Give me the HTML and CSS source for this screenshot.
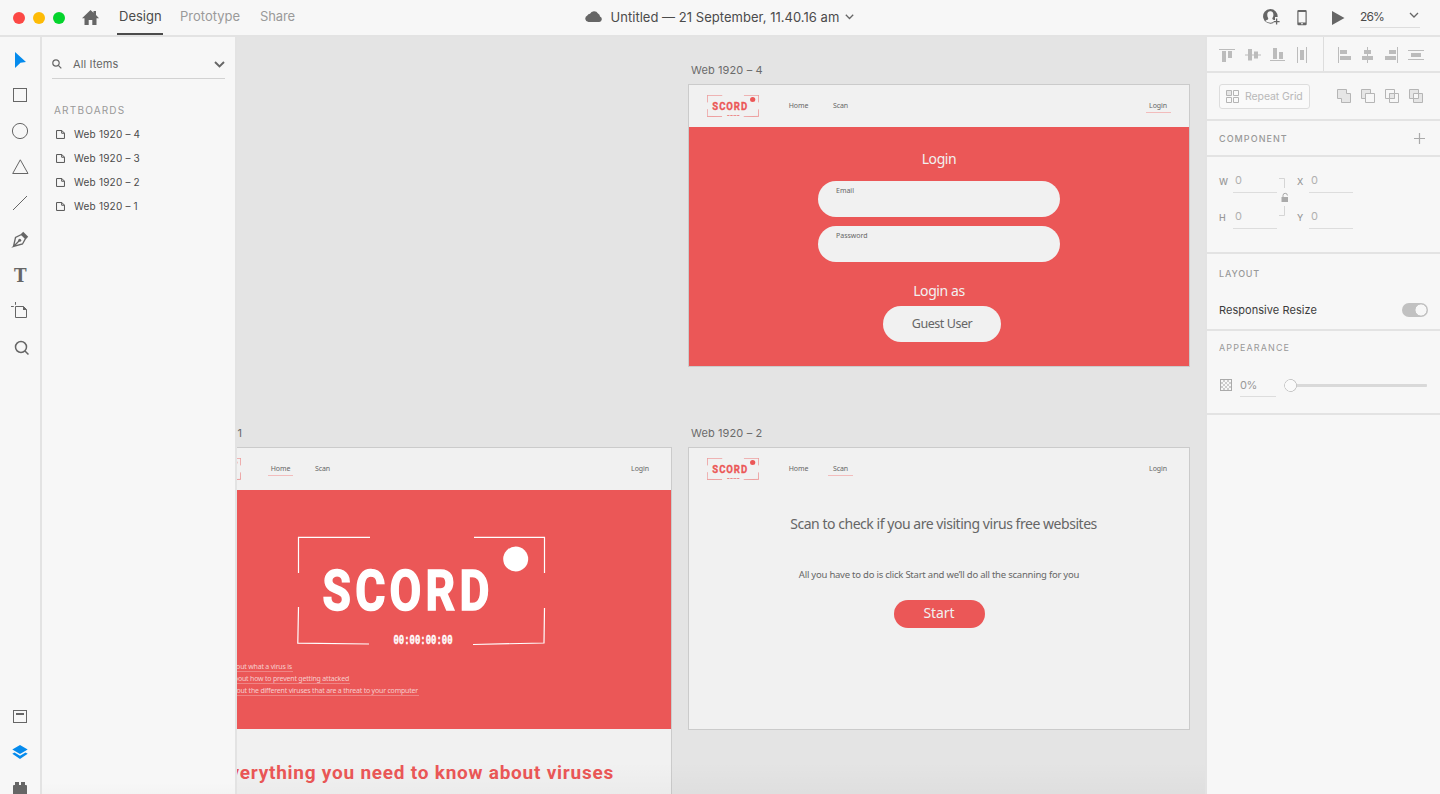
FILE: index.html
```html
<!DOCTYPE html>
<html lang="en">
<head>
<meta charset="utf-8">
<title>Untitled — 21 September, 11.40.16 am</title>
<link rel="stylesheet" href="styles.css">
</head>
<body>
<svg class="defs" aria-hidden="true">
  <symbol id="logo" viewBox="0 0 249 110" preserveAspectRatio="none">
    <g fill="none" stroke="currentColor">
      <path d="M73 1.3H1.5V37M1.5 71L.8 107.200L72 108"/>
      <path d="M177 1.3H247.500V37M247.500 72L247 107L176 108.500"/>
    </g>
    <circle cx="218.700" cy="23" r="12.500" fill="currentColor"/>
    <g fill="currentColor" stroke="currentColor" font-weight="700">
      <text transform="translate(25.500 74.300) scale(.83 1)" font-family="Roboto, sans-serif" stroke-width="1.600" font-size="55.500" textLength="201" lengthAdjust="spacing">SCORD</text>
      <text x="96.500" y="107.500" font-family="Liberation Mono, monospace" stroke-width=".4" font-size="12" textLength="59" lengthAdjust="spacingAndGlyphs">00:00:00:00</text>
    </g>
  </symbol>
  <symbol id="page" viewBox="0 0 10 10"><path d="M.6.6H6.500L9.400 3.500V9.400H.6ZM6.300.6V3.600H9.400" fill="none" stroke="currentColor" stroke-width="1.100"/></symbol>
</svg>

<div class="app">
  <header class="titlebar">
    <div class="title-left">
      <div class="lights"><i class="red"></i><i class="yellow"></i><i class="green"></i></div>
      <svg class="home" width="17" height="15" viewBox="0 0 17 15"><path d="M8.500 0L11.500 2.700V1H14V5L17 8.200H14.500V15H10.300V10H6.700V15H2.500V8.200H0Z"/></svg>
      <nav class="modes"><a class="mode active">Design</a><a class="mode proto">Prototype</a><a class="mode share">Share</a></nav>
    </div>
    <div class="doc">
      <svg width="17" height="11" viewBox="0 0 17 11"><path d="M3.500 11A3.400 3.400 0 0 1 2.300 4.500A3 3 0 0 1 5 2.800A4.500 4.500 0 0 1 13 2.500A3.500 3.500 0 0 1 15 5.600A2.800 2.800 0 0 1 14.300 11Z"/></svg>
      <span class="doc-name">Untitled — 21 September, 11.40.16 am</span>
      <svg width="9" height="6" viewBox="0 0 9 6"><path class="line" d="M.8.8L4.500 4.500L8.200.8"/></svg>
    </div>
    <div class="title-right">
      <svg class="user" width="17" height="17" viewBox="0 0 17 17"><path fill-rule="evenodd" d="M7.300 0A7.300 7.300 0 0 1 14.600 8H12V11H10.500V13.900A7.300 7.300 0 1 1 7.300 0ZM7.300 2.200C5 2.200 4.100 4 4.300 6.200C4.400 8 5.200 8.700 5.300 9.800C5.200 11 3 11 2.500 12C5 14 8.500 14.200 10.500 12.800V10.700C9.800 10.500 9.300 10.300 9.300 9.800C9.400 8.700 10.200 8 10.400 6.200C10.500 4 9.700 2.200 7.300 2.200Z"/><path class="line" d="M13.600 9.600V15.600M10.600 12.600H16.600"/></svg>
      <svg class="phone" width="10" height="16" viewBox="0 0 10 16"><path fill-rule="evenodd" d="M1.500 0H8.500Q9.700 0 9.700 1.300V14Q9.700 15.300 8.500 15.300H1.500Q.3 15.300 .3 14V1.300Q.3 0 1.500 0ZM1.500 2V12.400H8.500V2ZM4 13.200V14.300H6V13.200Z"/></svg>
      <svg class="play" width="13" height="14" viewBox="0 0 13 14"><path d="M0 0L12.500 7L0 14Z"/></svg>
      <div class="zoom"><span>26%</span><svg width="10" height="7" viewBox="0 0 10 7"><path class="line" d="M1 1L5 5L9 1"/></svg></div>
    </div>
  </header>

  <div class="workspace">
    <aside class="rail">
      <svg class="tool blue" viewBox="0 0 24 24"><path d="M7 4L18 14L12.500 14.800L7 20Z"/></svg>
      <svg class="tool" viewBox="0 0 24 24"><rect class="ol" x="5.500" y="4.500" width="13" height="13"/></svg>
      <svg class="tool" viewBox="0 0 24 24"><circle class="ol" cx="12" cy="11" r="7.600"/></svg>
      <svg class="tool" viewBox="0 0 24 24"><path class="ol" d="M12.300 3.800L20 17.500H4.700Z"/></svg>
      <svg class="tool" viewBox="0 0 24 24"><path class="ol" d="M5 18L19 4"/></svg>
      <svg class="tool" viewBox="0 0 24 24"><path class="ol nib" d="M5.500 18.500L7.500 9.500L13.500 6.500L17.500 10.500L14.500 16L5.500 18.500L11 13"/><circle cx="11.700" cy="12.200" r="1.500"/><path d="M15.200 3.800L20.200 8.800L18 11L13 6Z"/></svg>
      <svg class="tool" viewBox="0 0 24 24"><text x="6" y="18" font-family="DejaVu Serif, serif" font-size="19" textLength="12.600" lengthAdjust="spacingAndGlyphs" font-weight="700">T</text></svg>
      <svg class="tool" viewBox="0 0 24 24"><path class="ol" d="M7.500 6.500H15.500L18.500 9.500V17.500H7.500ZM7.500 2V4.800M3 6.500H5.800"/><path d="M15 6V10H19Z"/></svg>
      <svg class="tool" viewBox="0 0 24 24"><circle class="ol thick" cx="13" cy="11" r="5.500"/><path class="ol thick" d="M17 15L20.500 18.500"/></svg>
      <div class="rail-bottom">
        <svg class="tool" viewBox="0 0 24 24"><rect class="ol" x="5.500" y="6.500" width="13" height="12"/><path d="M8 9H16V11H8Z"/></svg>
        <svg class="tool blue" viewBox="0 0 24 24"><path d="M12 5L19.700 9.500L12 14L4.300 9.500ZM4.300 13.800L6.500 12.600L12 15.800L17.500 12.600L19.700 13.800L12 19Z"/></svg>
        <svg class="tool" viewBox="0 0 24 24"><path d="M7 6H11V9H13V6H17V9H18Q19 9 19 10V19H5V10Q5 9 6 9H7Z"/></svg>
      </div>
    </aside>

    <aside class="layers">
      <div class="filter">
        <svg width="10" height="10" viewBox="0 0 10 10"><circle cx="4" cy="4" r="3.200"/><path d="M6.300 6.300L9.300 9.300"/></svg>
        <span>All Items</span>
        <svg class="caret" width="11" height="7" viewBox="0 0 11 7"><path d="M1 1L5.500 5.500L10 1"/></svg>
      </div>
      <h2 class="list-head">ARTBOARDS</h2>
      <ul class="boards">
        <li><svg><use href="#page"/></svg>Web 1920 – 4</li>
        <li><svg><use href="#page"/></svg>Web 1920 – 3</li>
        <li><svg><use href="#page"/></svg>Web 1920 – 2</li>
        <li><svg><use href="#page"/></svg>Web 1920 – 1</li>
      </ul>
    </aside>

    <main class="canvas">
      <div class="artboard-slot at-4">
        <div class="board-label">Web 1920 – 4</div>
        <section class="artboard">
          <div class="site-nav"><svg class="site-logo"><use href="#logo"/></svg><a>Home</a><a>Scan</a><a class="login on">Login</a></div>
          <div class="signin">
            <h3>Login</h3>
            <div class="field">Email</div>
            <div class="field">Password</div>
            <h3 class="as">Login as</h3>
            <div class="guest">Guest User</div>
          </div>
        </section>
      </div>
      <div class="artboard-slot at-2">
        <div class="board-label">Web 1920 – 2</div>
        <section class="artboard">
          <div class="site-nav"><svg class="site-logo"><use href="#logo"/></svg><a>Home</a><a class="on">Scan</a><a class="login">Login</a></div>
          <div class="scan">
            <h3>Scan to check if you are visiting virus free websites</h3>
            <p>All you have to do is click Start and we’ll do all the scanning for you</p>
            <div class="start">Start</div>
          </div>
        </section>
      </div>
      <div class="artboard-slot at-1">
        <div class="board-label">Web 1920 – 1</div>
        <section class="artboard tall">
          <div class="site-nav"><svg class="site-logo"><use href="#logo"/></svg><a class="on">Home</a><a>Scan</a><a class="login">Login</a></div>
          <div class="hero">
            <svg class="hero-logo"><use href="#logo"/></svg>
            <ul class="links">
              <li class="k1"><a>Learn about what a virus is</a></li>
              <li class="k2"><a>Learn about how to prevent getting attacked</a></li>
              <li class="k3"><a>Learn about the different viruses that are a threat to your computer</a></li>
            </ul>
          </div>
          <h1 class="headline">Everything you need to know about viruses</h1>
        </section>
      </div>
    </main>

    <aside class="inspector">
      <div class="row align">
        <div class="align-group vertical">
          <svg viewBox="0 0 16 16"><path d="M0 2H16V3H0ZM3 4H7V15H3ZM9 4H13V11H9Z"/></svg>
          <svg viewBox="0 0 16 16"><path d="M1 7.500H17V8.500H1ZM4 2H8V13.500H4ZM10 4.500H14V11.500H10Z"/></svg>
          <svg viewBox="0 0 16 16"><path d="M1 13H16V14H1ZM4 1H8V12H4ZM10 5H14V12H10Z"/></svg>
          <svg viewBox="0 0 16 16"><path d="M3 0H4V16H3ZM12 0H13V16H12ZM6 3H10V13H6Z"/></svg>
        </div>
        <div class="align-group horizontal">
          <svg viewBox="0 0 16 16"><path d="M2 0H3V16H2ZM4 3H11V7H4ZM4 9H15V13H4Z"/></svg>
          <svg viewBox="0 0 16 16"><path d="M7 0H8V16H7ZM4 3H11V7H4ZM2 9H13V13H2Z"/></svg>
          <svg viewBox="0 0 16 16"><path d="M13 0H14V16H13ZM5 3H12V7H5ZM1 9H12V13H1Z"/></svg>
          <svg viewBox="0 0 16 16"><path d="M0 3H16V4H0ZM0 12H16V13H0ZM3 6H13V10H3Z"/></svg>
        </div>
      </div>
      <div class="row repeat">
        <div class="repeat-btn"><svg width="13" height="13" viewBox="0 0 13 13"><path class="filled" d="M.5.5H5.500V5.500H.5Z"/><path d="M7.500.5H12.500V5.500H7.500ZM.5 7.500H5.500V12.500H.5ZM7.500 7.500H12.500V12.500H7.500Z"/></svg>Repeat Grid</div>
        <div class="bool">
          <svg viewBox="0 0 14 14"><path class="filled" d="M.5.5H9.500V4.500H13.500V13.500H4.500V9.500H.5Z"/></svg>
          <svg viewBox="0 0 14 14"><path class="filled" d="M.5.5H9.500V9.500H.5Z"/><path class="paper" d="M4.500 4.500H13.500V13.500H4.500Z"/></svg>
          <svg viewBox="0 0 14 14"><path d="M.5.5H9.500V9.500H.5Z"/><path d="M4.500 4.500H13.500V13.500H4.500Z"/><path class="filled" d="M4.500 4.500H9.500V9.500H4.500Z"/></svg>
          <svg viewBox="0 0 14 14"><path class="filled" fill-rule="evenodd" d="M.5.5H9.500V9.500H.5ZM4.500 4.500H13.500V13.500H4.500Z"/></svg>
        </div>
      </div>
      <div class="row component"><h2>COMPONENT</h2><svg width="11" height="11" viewBox="0 0 11 11"><path d="M5.500 0V11M0 5.500H11"/></svg></div>
      <div class="row geometry">
        <label>W</label><output>0</output><i></i><label>X</label><output>0</output>
        <label>H</label><output>0</output><i></i><label>Y</label><output>0</output>
        <svg class="lock" width="10" height="38" viewBox="0 0 10 38"><path class="wire" d="M0 .5H5.500V10M5.500 28V37.500H0"/><path class="shackle" d="M4 20V17.500A2.200 2.200 0 0 1 8.400 17.500"/><path class="body" d="M2.500 19H9V24H2.500Z"/></svg>
      </div>
      <div class="row layout"><h2>LAYOUT</h2><div class="resize"><span>Responsive Resize</span><b class="toggle"></b></div></div>
      <div class="row appearance"><h2>APPEARANCE</h2>
        <div class="opacity"><span class="checker"></span><span class="pct">0%</span><span class="slider"></span></div>
      </div>
    </aside>
  </div>
</div>
</body>
</html>
```
FILE: styles.css
```css
* { box-sizing: border-box; margin: 0; padding: 0; }
body { width: 1440px; height: 794px; overflow: hidden; background: #f7f7f7; color: #555; font-family: Inter, "Liberation Sans", sans-serif; }
ul { list-style: none; }
svg { display: block; flex: none; }
.defs { position: absolute; width: 0; height: 0; }
.app { height: 794px; display: flex; flex-direction: column; }

/* Title bar */
.titlebar { height: 37px; border-bottom: 2px solid #e3e3e3; display: grid; grid-template-columns: 1fr auto 1fr; align-items: center; fill: #666; }
.title-left { display: flex; align-items: center; height: 35px; padding-left: 13px; }
.lights { display: flex; gap: 8px; }
.lights i { width: 12px; height: 12px; border-radius: 50%; }
.red { background: #fc4845; }
.yellow { background: #fdbb06; }
.green { background: #04d42c; }
.home { margin: -1px 0 0 17px; }
.modes { display: flex; margin-left: 18px; height: 35px; font-size: 13px; line-height: 33px; color: #9a9a9a; }
.mode.active { width: 46px; padding-left: 2px; color: #4b4b4b; border-bottom: 2px solid #4b4b4b; letter-spacing: 0; }
.proto { width: 80px; margin-left: 17px; letter-spacing: 0; }
.share { letter-spacing: -.15px; }
.doc { display: flex; align-items: center; font-size: 13px; color: #4b4b4b; margin: -2px 2px 0 0; }
.doc-name { margin: 0 4px 0 9px; width: 230px; white-space: nowrap; letter-spacing: .03px; }
.line { fill: none; stroke: #666; stroke-width: 1.300; }
.title-right { display: flex; align-items: center; justify-content: flex-end; padding-right: 20px; }
.phone { margin-left: 17px; }
.play { margin-left: 25px; }
.zoom { margin: -1px 0 0 15px; width: 60px; height: 22px; border-bottom: 1px solid #ddd; display: flex; align-items: center; justify-content: space-between; font-size: 12px; letter-spacing: -.9px; color: #4b4b4b; }
.zoom svg { margin: -2px 1px 0 0; }

.workspace { flex: 1; min-height: 0; display: flex; }

/* Tools */
.rail { width: 42px; flex: none; border-right: 2px solid #e3e3e3; padding-top: 5px; display: flex; flex-direction: column; align-items: center; }
.tool { width: 24px; height: 24px; margin: 6px 0; fill: #666; }
.tool.blue { fill: #058bed; }
.ol { fill: none; stroke: #666; stroke-width: 1; }
.nib { stroke-width: 1.300; }
.thick { stroke-width: 1.500; }
.rail-bottom { margin-top: auto; margin-bottom: -12px; display: flex; flex-direction: column; }

/* Layer list */
.layers { width: 193px; flex: none; padding: 13px 10px 0; background: linear-gradient(to bottom, transparent 745px, rgba(0,0,0,.012)); }
.filter { height: 29px; border-bottom: 1px solid #d2d2d2; display: flex; align-items: center; font-size: 11px; color: #666; fill: none; stroke: #666; stroke-width: 1.200; }
.filter span { margin-left: 11px; stroke: none; letter-spacing: .1px; }
.filter .caret { margin-left: auto; stroke-width: 1.900; }
.list-head { margin: 24px 0 0 2px; font-size: 10px; font-weight: 400; line-height: 14px; letter-spacing: 1.200px; color: #999; }
.boards { margin-top: 5px; }
.boards li { height: 24px; display: flex; align-items: center; padding-left: 4px; font-size: 10px; color: #4b4b4b; letter-spacing: .2px; }
.boards svg { width: 9px; height: 9px; margin-right: 9px; color: #555; }

/* Canvas and artboards */
.canvas { position: relative; flex: 1; min-width: 0; overflow: hidden; background: #e4e4e4; border-left: 2px solid #e3e3e3; }
.canvas::after { content: ""; position: absolute; left: 0; right: 0; bottom: 0; height: 32px; background: linear-gradient(to bottom, transparent, rgba(0,0,0,.025)); }
.artboard-slot { position: absolute; width: 502px; }
.at-4 { left: 451px; top: 25px; }
.at-2 { left: 451px; top: 388px; }
.at-1 { left: -67px; top: 388px; }
.board-label { height: 22px; padding-left: 3px; font-size: 11px; line-height: 17px; color: #6b6b6b; letter-spacing: .12px; }
.artboard { height: 283px; background: #f1f1f1; border: 1px solid #cbcbcb; font-family: "Noto Sans", "Open Sans", sans-serif; color: #666; }
.artboard.tall { height: 420px; }
.site-nav { height: 42px; padding: 0 18.500px 0 18px; display: flex; align-items: flex-start; font-size: 7px; }
.site-logo { width: 52px; height: 22px; margin: 10px 27px 0 0; color: #eb5757; stroke-width: 2.600; }
.site-nav a { width: 25px; height: 16px; margin: 12px 17px 0 0; text-align: center; line-height: 17px; border-bottom: 1px solid transparent; letter-spacing: -.1px; }
.site-nav a.on { border-bottom-color: #f2bcbc; }
.site-nav .login { margin: 12px 0 0 auto; }
h3 { font-weight: 400; }
.signin { height: 239px; background: #eb5757; display: flex; flex-direction: column; align-items: center; color: #f1f1f1; }
.signin h3 { margin-top: 22px; height: 31.500px; font-size: 14px; line-height: 20px; letter-spacing: -.4px; }
.field { width: 242px; height: 36.500px; margin-bottom: 8.500px; padding: 5.500px 18px; border-radius: 19px; background: #f1f1f1; color: #666; font-size: 7px; line-height: 10px; }
.signin h3.as { margin-top: 10px; height: 25px; }
.guest { width: 118px; height: 36.500px; margin-left: 6px; border-radius: 19px; background: #f1f1f1; color: #666; font-size: 12.500px; line-height: 35px; text-align: center; letter-spacing: -.45px; }
.scan { display: flex; flex-direction: column; align-items: center; white-space: nowrap; }
.scan h3 { margin: 24px 0 0 9px; font-size: 14px; line-height: 20px; letter-spacing: -.46px; }
.scan p { margin-top: 33px; font-size: 9.500px; line-height: 16px; letter-spacing: -.23px; }
.start { width: 91px; height: 27.500px; margin-top: 17px; border-radius: 14px; background: #eb5757; color: #f1f1f1; font-size: 14px; line-height: 26px; text-align: center; letter-spacing: -.1px; }
.hero { height: 239px; background: #eb5757; color: #fff; padding: 46px 0 0 126px; }
.hero-logo { width: 249px; height: 110px; stroke-width: 1.200; }
.links { margin: 16px 0 0 -117px; font-size: 7px; color: #f6cdcd; letter-spacing: -.2px; }
.links li { height: 12px; display: flex; justify-content: flex-end; }
.links a { height: 10px; padding-right: 1px; line-height: 10px; border-bottom: 1px solid #ef8585; white-space: nowrap; flex: none; }
.k1 { width: 113px; }
.k2 { width: 170px; }
.k3 { width: 239px; }
.headline { margin: 31px 57px 0 0; text-align: right; font: 700 19px/26px Roboto, sans-serif; letter-spacing: .76px; color: #eb5757; white-space: nowrap; }

/* Property inspector */
.inspector { width: 235px; flex: none; border-left: 2px solid #e3e3e3; fill: #bcbcbc; }
.row { border-bottom: 2px solid #e3e3e3; }
.row h2 { font-size: 9px; font-weight: 500; letter-spacing: 1.050px; color: #999; line-height: 12px; }
.align { height: 36px; display: flex; }
.align-group { display: flex; align-items: center; padding-top: 1px; }
.align svg { width: 16px; height: 16px; overflow: visible; }
.vertical { width: 117px; padding-left: 12px; gap: 9px; border-right: 1px solid #ddd; }
.horizontal { padding-left: 12px; gap: 8px; }
.repeat { height: 48px; padding: 0 17px 0 12px; display: flex; align-items: center; justify-content: space-between; }
.repeat svg path { fill: none; stroke: #b5b5b5; }
.repeat svg path.filled { fill: #e6e6e6; }
.repeat svg path.paper { fill: #f7f7f7; }
.repeat-btn { width: 91px; height: 25px; border: 1px solid #ddd; border-radius: 3px; background: #fafafa; display: flex; align-items: center; padding-left: 6px; gap: 6px; font-size: 10.500px; color: #b8b8b8; white-space: nowrap; letter-spacing: -.08px; }
.bool { display: flex; gap: 10px; }
.bool svg { width: 14px; height: 14px; }
.component { height: 36px; padding: 1px 15px 0 12px; display: flex; align-items: center; justify-content: space-between; }
.component path { stroke: #aaa; stroke-width: 1.200; }
.geometry { position: relative; height: 97px; padding: 11px 0 0 12px; display: grid; grid-template-columns: 14px 44px 20px 12px 44px; grid-auto-rows: 36px; font-size: 9px; color: #999; }
.geometry label { line-height: 28px; font-weight: 500; }
.geometry output { height: 25px; padding-left: 2px; border-bottom: 1px solid #ddd; font-size: 11px; line-height: 24px; color: #b0b0b0; }
.lock { position: absolute; left: 72px; top: 21px; }
.lock .wire { fill: none; stroke: #d5d5d5; }
.lock .shackle { fill: none; stroke: #aaa; }
.lock .body { fill: #aaa; }
.layout { height: 77px; padding: 14px 12px 0; }
.layout h2 { letter-spacing: .8px; }
.resize { margin-top: 22px; display: flex; align-items: center; justify-content: space-between; height: 16px; font-size: 11px; color: #3c3c3c; letter-spacing: .05px; }
.toggle { width: 26px; height: 14px; border-radius: 7px; background: radial-gradient(circle at 19px 7px, #f7f7f7 5.200px, transparent 5.800px), #c1c1c1; }
.appearance { height: 84px; padding: 11px 12px 0; }
.appearance h2 { font-weight: 400; letter-spacing: 1.100px; }
.opacity { margin-top: 19px; height: 24px; display: flex; align-items: center; }
.checker { width: 12px; height: 12px; margin-left: 1px; border: 1px solid #aaa; background: conic-gradient(#ccc 25%, #f7f7f7 0 50%, #ccc 0 75%, #f7f7f7 0) 0 0 / 4px 4px; }
.pct { width: 36px; height: 24px; margin-left: 8px; border-bottom: 1px solid #ddd; font-size: 11px; line-height: 24px; color: #999; letter-spacing: -.4px; }
.slider { width: 143px; height: 13px; margin-left: 8px; border-radius: 7px; background: radial-gradient(circle at 6.500px 6.500px, #fafafa 5.300px, #c8c8c8 5.800px, #c8c8c8 6.200px, transparent 6.600px), linear-gradient(#d9d9d9, #d9d9d9) 12px 5px / 131px 3px no-repeat; }
```
